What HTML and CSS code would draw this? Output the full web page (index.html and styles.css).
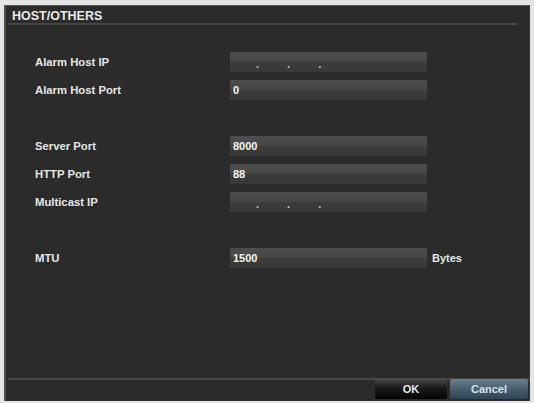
FILE: index.html
```html
<!DOCTYPE html>
<html lang="en">
<head>
  <meta charset="UTF-8">
  <title>HOST/OTHERS</title>
  <link rel="stylesheet" href="styles.css">
</head>
<body>
  <div class="dialog">
    <div class="title">HOST/OTHERS</div>

    <div class="form">
      <div class="row">
        <div class="label">Alarm Host IP</div>
        <div class="field ip"><span>.</span><span>.</span><span>.</span></div>
      </div>
      <div class="row">
        <div class="label">Alarm Host Port</div>
        <div class="field">0</div>
      </div>
      <div class="row spacer"></div>
      <div class="row">
        <div class="label">Server Port</div>
        <div class="field">8000</div>
      </div>
      <div class="row">
        <div class="label">HTTP Port</div>
        <div class="field">88</div>
      </div>
      <div class="row">
        <div class="label">Multicast IP</div>
        <div class="field ip"><span>.</span><span>.</span><span>.</span></div>
      </div>
      <div class="row spacer"></div>
      <div class="row">
        <div class="label">MTU</div>
        <div class="field">1500</div>
        <div class="unit">Bytes</div>
      </div>
    </div>

    <div class="footer">
      <div class="btn btn-ok">OK</div>
      <div class="btn btn-cancel">Cancel</div>
    </div>
  </div>
</body>
</html>
```

FILE: styles.css
```css
* {margin:0; padding:0; box-sizing:border-box;}
html,body {
  width:100%; height:100%; overflow:hidden;
  background:#e4e4e4;
  font-family:"Liberation Sans", Arial, sans-serif;
  color:#fff;
}
.dialog {
  margin:5px 4px 0 4px; height:396px;
  background:#2b2b2b;
  border-left:2px solid #4e4e4e; border-top:1px solid #555; border-right:1px solid #3c3c3c;
  display:flex; flex-direction:column;
}
.title {
  height:19px; margin:0 12px 0 2px; padding-left:4px;
  font-size:12.5px; font-weight:bold; line-height:20px; color:#e8e8e8;
  border-bottom:2px solid #464646;
}
.form {
  flex:1; padding:27px 0 0 29px;
  display:flex; flex-direction:column; gap:8px;
}
.row {
  height:20px; display:flex; align-items:center;
}
.spacer {height:20px;}
.label {
  width:195px; font-size:11.3px; font-weight:bold; color:#e6e6e6;
}
.field {
  width:197px; height:20px; padding-left:3px;
  font-size:11px; font-weight:bold; line-height:21px; color:#f4f4f4;
  background:linear-gradient(to bottom,#4d4d4d 0,#474747 45%,#3c3c3c 52%,#383838 100%);
}
.ip {
  display:flex; padding-left:26px; gap:28px; line-height:24px; color:#cfcfcf;
}
.unit {
  margin-left:5px; font-size:11px; font-weight:bold; color:#e6e6e6;
}
.footer {
  height:23px; margin:0 0 0 2px;
  border-top:2px solid #474747;
  display:flex; justify-content:flex-end; gap:3px; padding-right:1px;
}
.btn {
  width:72px; height:20px; margin-top:-1px;
  font-size:11px; font-weight:bold; line-height:21px; text-align:center;
  border-radius:2px;
}
.btn-ok {
  background:linear-gradient(to bottom,#4a4a4a 0,#1a1a1a 45%,#050505 100%);
  color:#e8e8e8;
}
.btn-cancel {
  width:78px;
  background:linear-gradient(to bottom,#6a8090 0,#4a6272 45%,#2e4452 100%);
  color:#d8e2ea;
}
```
